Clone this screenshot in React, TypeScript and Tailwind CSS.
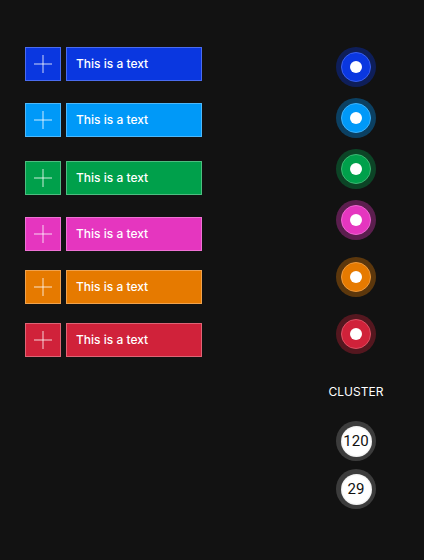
import React from "react";

const rows = [
  { sq: "bg-[#0a37e0] border-[#4a6cf0]", box: "bg-[#0a37e0] border-[#4a6cf0]" },
  { sq: "bg-[#0099f8] border-[#4cb8fb]", box: "bg-[#0099f8] border-[#4cb8fb]" },
  { sq: "bg-[#00a04b] border-[#4dbd80]", box: "bg-[#00a04b] border-[#4dbd80]" },
  { sq: "bg-[#e536bf] border-[#ee72d3]", box: "bg-[#e536bf] border-[#ee72d3]" },
  { sq: "bg-[#e67a00] border-[#f0a24d]", box: "bg-[#e67a00] border-[#f0a24d]" },
  { sq: "bg-[#d0223a] border-[#df6475]", box: "bg-[#d0223a] border-[#df6475]" },
];
const rowMt = ["mt-0", "mt-[22px]", "mt-[24px]", "mt-[22px]", "mt-[19px]", "mt-[19px]"];

const dots = [
  { halo: "bg-[#0a37e0]/35", inner: "bg-[#0a37e0] border-[#3a60ee]" },
  { halo: "bg-[#0099f8]/35", inner: "bg-[#0099f8] border-[#3db2fb]" },
  { halo: "bg-[#00a04b]/35", inner: "bg-[#00a04b] border-[#3db673]" },
  { halo: "bg-[#e536bf]/35", inner: "bg-[#e536bf] border-[#ec66cf]" },
  { halo: "bg-[#e67a00]/35", inner: "bg-[#e67a00] border-[#ee9a3d]" },
  { halo: "bg-[#d0223a]/35", inner: "bg-[#d0223a] border-[#dc5064]" },
];
const dotMt = ["mt-0", "mt-[11px]", "mt-[11px]", "mt-[11px]", "mt-[17px]", "mt-[17px]"];

function Plus() {
  return (
    <svg width="18" height="18" viewBox="0 0 18 18">
      <line x1="9" y1="0" x2="9" y2="18" stroke="white" strokeOpacity="0.4" strokeWidth="2" />
      <line x1="0" y1="9" x2="18" y2="9" stroke="white" strokeOpacity="0.4" strokeWidth="2" />
    </svg>
  );
}

function Cluster({ n, mt }: { n: string; mt: string }) {
  return (
    <div className={`${mt} w-[40px] h-[40px] rounded-full bg-[radial-gradient(circle,#3c3c3c_0%,#3c3c3c_80%,#333333_100%)] flex items-center justify-center`}>
      <div className="w-[31px] h-[31px] rounded-full bg-[radial-gradient(circle,#ffffff_0%,#ffffff_62%,#d8d8d8_80%,#9a9a9a_100%)] flex items-center justify-center">
        <span className="text-[15px] leading-none text-[#111111] font-['Roboto',sans-serif]">{n}</span>
      </div>
    </div>
  );
}

export default function App() {
  return (
    <div className="w-[424px] h-[560px] bg-[#121212] flex font-['Inter',sans-serif]">
      <div className="pl-[25px] pt-[47px] flex flex-col">
        {rows.map((r, i) => (
          <div key={i} className={`${rowMt[i]} flex gap-[5px]`}>
            <div className={`w-[36px] h-[34px] border ${r.sq} flex items-center justify-center`}>
              <Plus />
            </div>
            <div className={`w-[136px] h-[34px] border ${r.box} flex items-center pl-[9px]`}>
              <span className="text-white text-[12px] font-medium font-['Inter',sans-serif]">This is a text</span>
            </div>
          </div>
        ))}
      </div>
      <div className="ml-auto mr-[28px] w-[80px] pt-[47px] flex flex-col items-center">
        {dots.map((d, i) => (
          <div key={i} className={`${dotMt[i]} w-[40px] h-[40px] rounded-full ${d.halo} flex items-center justify-center`}>
            <div className={`w-[30px] h-[30px] rounded-full border ${d.inner} flex items-center justify-center`}>
              <div className="w-[12px] h-[12px] rounded-full bg-white" />
            </div>
          </div>
        ))}
        <div className="mt-[30px] h-[16px] leading-[16px] text-[12px] text-white font-normal font-['Inter',sans-serif]">CLUSTER</div>
        <Cluster n="120" mt="mt-[21px]" />
        <Cluster n="29" mt="mt-[8px]" />
      </div>
    </div>
  );
}
